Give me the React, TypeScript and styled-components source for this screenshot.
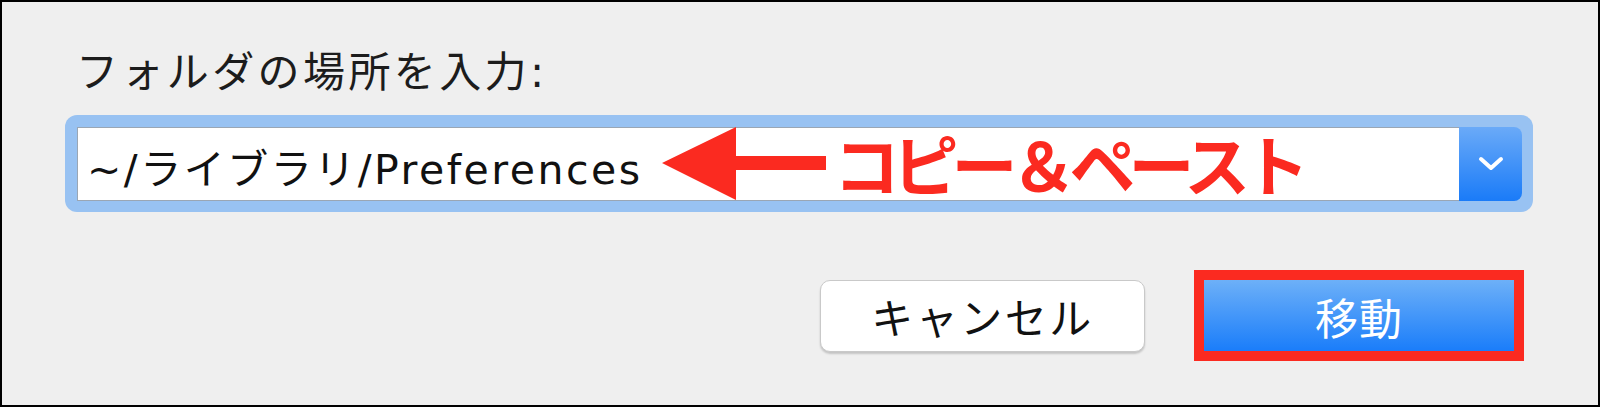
import React from "react";
import styled, { createGlobalStyle } from "styled-components";

const Global = createGlobalStyle`
  html, body { margin: 0; padding: 0; background: #efefef; }
  * { box-sizing: border-box; }
`;

const JP = `"DejaVu Sans", "Noto Sans CJK JP", sans-serif`;

const Frame = styled.div`
  width: 1600px;
  height: 407px;
  border: 2px solid #000;
  background: #efefef;
  padding: 44px 65px 0 63px;
  display: flex;
  flex-direction: column;
  font-family: ${JP};
`;

const Label = styled.div`
  font-size: 42px;
  line-height: 54px;
  color: #1c1c1c;
  padding-left: 11px;
  letter-spacing: 3.4px;
`;

const Ring = styled.div`
  margin-top: 15px;
  padding: 12px 11px 11px 12px;
  background: #98c2f2;
  border-radius: 12px;
`;

const Field = styled.div`
  display: flex;
  height: 74px;
`;

const InputArea = styled.div`
  flex: 1;
  display: flex;
  align-items: center;
  background: #fff;
  border: 1px solid #9aa6b4;
  border-right: none;
  padding-left: 9px;
`;

const Value = styled.span`
  font-size: 41px;
  letter-spacing: 2.5px;
  color: #111;
  white-space: nowrap;
  margin-top: 4px;
`;

const Arrow = styled.svg`
  margin-left: 19px;
  flex: none;
`;

const Note = styled.span`
  margin-left: 8px;
  font-family: "Noto Sans CJK JP", sans-serif;
  font-weight: 700;
  font-size: 66px;
  letter-spacing: -7px;
  color: #fb2a20;
  white-space: nowrap;
  line-height: 1;
  margin-top: -4px;
`;

const DropButton = styled.div`
  width: 63px;
  display: flex;
  align-items: center;
  justify-content: center;
  background: linear-gradient(#6aaaf8, #1a7bf8);
  border-radius: 0 8px 8px 0;
`;

const Actions = styled.div`
  margin-top: 58px;
  display: flex;
  justify-content: flex-end;
  align-items: center;
  gap: 49px;
  padding-right: 9px;
`;

const CancelButton = styled.div`
  width: 325px;
  height: 72px;
  background: #fff;
  border: 1px solid #c9c9c9;
  border-radius: 10px;
  box-shadow: 0 2px 2px rgba(0, 0, 0, 0.18);
  display: flex;
  align-items: center;
  justify-content: center;
  font-size: 42px;
  letter-spacing: 2.5px;
  color: #111;
`;

const Highlight = styled.div`
  border: 10px solid #fb2a20;
`;

const PrimaryButton = styled.div`
  width: 310px;
  height: 71px;
  background: linear-gradient(#6db0f8, #1a7dfa);
  display: flex;
  align-items: center;
  justify-content: center;
  font-size: 43px;
  letter-spacing: 1px;
  color: #fff;
`;

export default function App() {
  return (
    <>
      <Global />
      <Frame>
        <Label>フォルダの場所を入力:</Label>
        <Ring>
          <Field>
            <InputArea>
              <Value>~/ライブラリ/Preferences</Value>
              <Arrow width="164" height="74" viewBox="0 0 164 74">
                <polygon points="0,36 74,0 74,29 164,29 164,43 74,43 74,73" fill="#fb2a20" />
              </Arrow>
              <Note>コピー＆ペースト</Note>
            </InputArea>
            <DropButton>
              <svg width="26" height="16" viewBox="0 0 26 16">
                <polyline points="3,3 13,12 23,3" fill="none" stroke="#fff" strokeWidth="4" strokeLinecap="round" strokeLinejoin="round" />
              </svg>
            </DropButton>
          </Field>
        </Ring>
        <Actions>
          <CancelButton>キャンセル</CancelButton>
          <Highlight>
            <PrimaryButton>移動</PrimaryButton>
          </Highlight>
        </Actions>
      </Frame>
    </>
  );
}
